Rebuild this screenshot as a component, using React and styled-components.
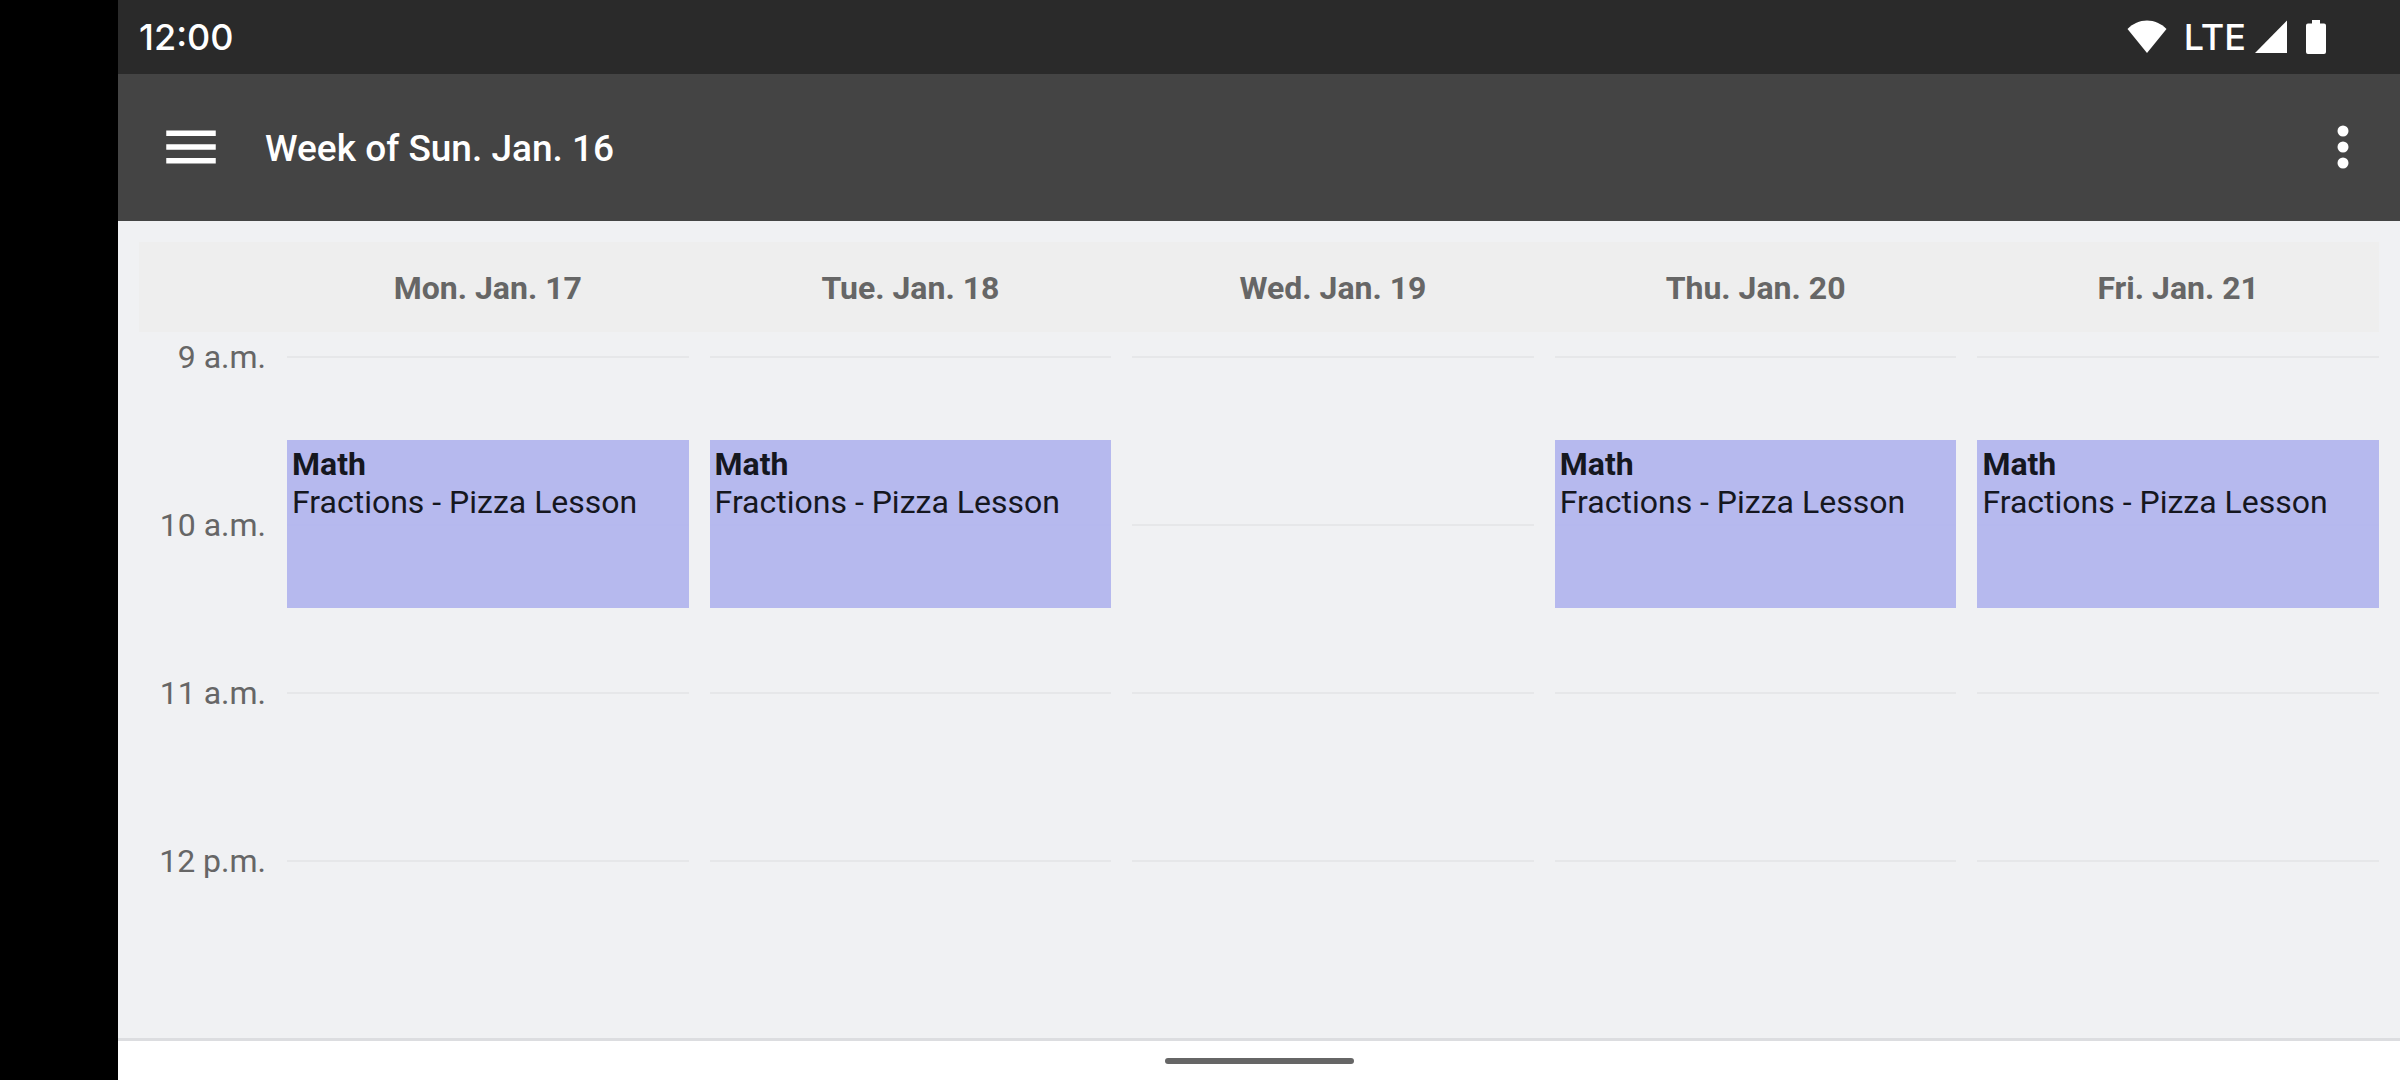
import React from "react";
import styled, { createGlobalStyle } from "styled-components";

const GlobalStyle = createGlobalStyle`
  * { box-sizing: border-box; }
  body {
    margin: 0;
    background: #000;
    font-family: Roboto, "Liberation Sans", sans-serif;
  }
`;

const Screen = styled.div`
  display: flex;
  min-height: 100vh;
  background: #000;
`;

const Cutout = styled.div`
  flex: 0 0 118px;
`;

const Device = styled.div`
  flex: 1;
  min-width: 0;
  display: flex;
  flex-direction: column;
  background: #f0f1f3;
`;

const StatusBar = styled.div`
  display: flex;
  align-items: center;
  justify-content: space-between;
  height: 74px;
  padding: 0 74px 0 21px;
  background: #2a2a2a;
  color: #fff;
  font-family: Inter, Roboto, sans-serif;
  font-size: 36px;
  line-height: 44px;
  font-weight: 500;
`;

const Clock = styled.time``;

const StatusIcons = styled.div`
  display: flex;
  align-items: center;
`;

const Network = styled.span`
  padding: 0 9px 0 14px;
`;

const StatusGlyph = styled.svg`
  display: block;
  margin-right: ${(p) => p.$gap || 0}px;
  fill: #fff;
`;

const AppBar = styled.header`
  display: flex;
  align-items: center;
  height: 147px;
  padding: 0 24px 1px 40px;
  background: #444;
  color: #fff;
`;

const IconButton = styled.button`
  display: flex;
  align-items: center;
  justify-content: center;
  width: 66px;
  height: 66px;
  padding: 0;
  border: 0;
  background: none;
  color: inherit;
  cursor: pointer;

  svg {
    flex: none;
    fill: currentColor;
  }
`;

const Title = styled.h1`
  flex: 1;
  margin: 0;
  padding: 4px 0 0 41px;
  font-size: 37px;
  line-height: 44px;
  font-weight: 500;
`;

const Calendar = styled.main`
  flex: 1;
  padding: 21px 21px 0;
`;

const WeekGrid = styled.div`
  display: grid;
  grid-template-columns: 127px repeat(5, minmax(0, 1fr));
  column-gap: 21px;
`;

const DayHeader = styled(WeekGrid)`
  align-items: center;
  height: 90px;
  padding-top: 2px;
  background: #eee;
`;

const DayName = styled.h2`
  grid-column: ${(p) => p.$day + 2};
  margin: 0;
  text-align: center;
  color: #666;
  font-size: 32px;
  line-height: 38px;
  font-weight: 700;
`;

const Hours = styled(WeekGrid)`
  grid-auto-rows: 84px;
  padding-top: 24px;
`;

const HourLabel = styled.div`
  grid-column: 1;
  grid-row: ${(p) => p.$slot + 1};
  display: flex;
  align-items: center;
  justify-content: flex-end;
  height: 2px;
  color: #666;
  font-size: 32px;
  line-height: 38px;
`;

const HourLine = styled.div`
  grid-column: ${(p) => p.$day + 2};
  grid-row: ${(p) => p.$slot + 1};
  height: 2px;
  background: #e6e7e9;
`;

const Lesson = styled.article`
  grid-column: ${(p) => p.$day + 2};
  grid-row: ${(p) => p.$slot + 1} / span ${(p) => p.$span};
  padding: 5px;
  background: rgba(177, 180, 238, 0.92);
  color: #15171f;
  font-size: 32px;
  line-height: 38px;
`;

const Subject = styled.h3`
  margin: 0;
  font-size: 32px;
  font-weight: 700;
`;

const Topic = styled.p`
  margin: 0;
`;

const NavBar = styled.footer`
  display: flex;
  justify-content: center;
  height: 42px;
  padding-top: 17px;
  border-top: 3px solid #dcdde0;
  background: #fff;
`;

const HomeHandle = styled.div`
  width: 189px;
  height: 6px;
  border-radius: 3px;
  background: #666;
`;

const days = ["Mon. Jan. 17", "Tue. Jan. 18", "Wed. Jan. 19", "Thu. Jan. 20", "Fri. Jan. 21"];

// Slots are half hours counted from 9 a.m.
const hours = [
  { label: "9 a.m.", slot: 0 },
  { label: "10 a.m.", slot: 2 },
  { label: "11 a.m.", slot: 4 },
  { label: "12 p.m.", slot: 6 },
];

const lessons = [0, 1, 3, 4].map((day) => ({
  day,
  slot: 1,
  span: 2,
  subject: "Math",
  topic: "Fractions - Pizza Lesson",
}));

export default function App() {
  return (
    <Screen>
      <GlobalStyle />
      <Cutout />
      <Device>
        <StatusBar>
          <Clock>12:00</Clock>
          <StatusIcons>
            <StatusGlyph $gap={3} width="40" height="34" viewBox="0 0 40 34" aria-label="Wi-Fi">
              <path d="M20 33 0.5 9C6 3.5 12.500 0.500 20 0.500S34 3.500 39.500 9Z" />
            </StatusGlyph>
            <Network>LTE</Network>
            <StatusGlyph $gap={19} width="32" height="34" viewBox="0 0 32 34" aria-label="Signal">
              <path d="M32 0.500V33H0Z" />
            </StatusGlyph>
            <StatusGlyph width="20" height="34" viewBox="0 0 20 34" aria-label="Battery">
              <path d="M6 0h8v3.500h4a2 2 0 0 1 2 2V32a2 2 0 0 1-2 2H2a2 2 0 0 1-2-2V5.500a2 2 0 0 1 2-2h4Z" />
            </StatusGlyph>
          </StatusIcons>
        </StatusBar>

        <AppBar>
          <IconButton aria-label="Open menu">
            <svg width="66" height="66" viewBox="0 0 24 24">
              <path d="M3 18h18v-2H3v2zm0-5h18v-2H3v2zm0-7v2h18V6H3z" />
            </svg>
          </IconButton>
          <Title>Week of Sun. Jan. 16</Title>
          <IconButton aria-label="More options">
            <svg width="66" height="66" viewBox="0 0 66 66">
              <circle cx="33" cy="17" r="5.500" />
              <circle cx="33" cy="33" r="5.500" />
              <circle cx="33" cy="49" r="5.500" />
            </svg>
          </IconButton>
        </AppBar>

        <Calendar>
          <DayHeader>
            {days.map((name, day) => (
              <DayName key={name} $day={day}>{name}</DayName>
            ))}
          </DayHeader>
          <Hours>
            {hours.map(({ label, slot }) => (
              <React.Fragment key={label}>
                <HourLabel $slot={slot}>{label}</HourLabel>
                {days.map((name, day) => (
                  <HourLine key={name} $day={day} $slot={slot} />
                ))}
              </React.Fragment>
            ))}
            {lessons.map((l) => (
              <Lesson key={l.day} $day={l.day} $slot={l.slot} $span={l.span}>
                <Subject>{l.subject}</Subject>
                <Topic>{l.topic}</Topic>
              </Lesson>
            ))}
          </Hours>
        </Calendar>

        <NavBar>
          <HomeHandle />
        </NavBar>
      </Device>
    </Screen>
  );
}
